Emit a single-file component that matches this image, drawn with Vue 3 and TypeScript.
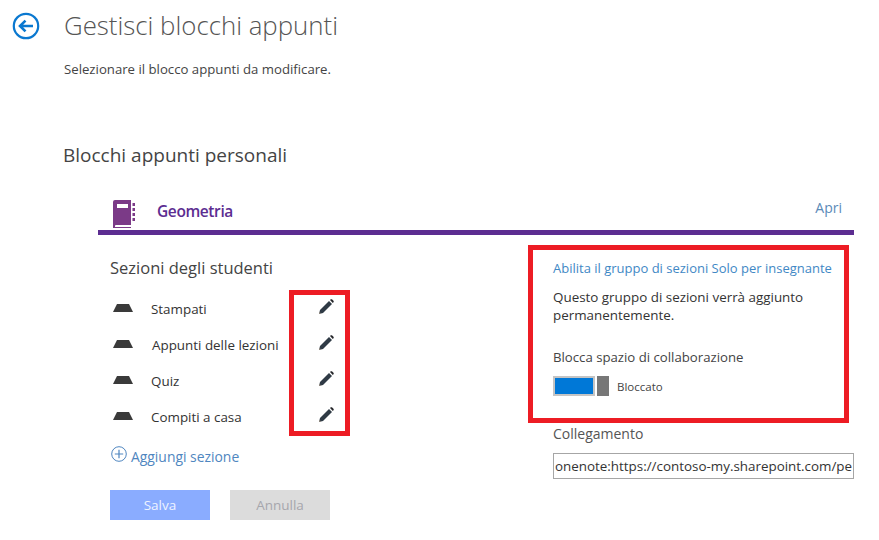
<script setup lang="ts">
const sections = [
  { name: 'Stampati', indent: 0 },
  { name: 'Appunti delle lezioni', indent: 1 },
  { name: 'Quiz', indent: 0 },
  { name: 'Compiti a casa', indent: 0 },
]
</script>

<template>
  <div class="page">
    <header class="head">
      <svg class="back" width="28" height="28" viewBox="0 0 28 28" fill="none" stroke="#0a78d0">
        <circle cx="14" cy="14" r="12.2" stroke-width="2.2" />
        <path d="M21 14H8M13.5 8.6 8 14l5.5 5.4" stroke-width="2.6" />
      </svg>
      <div>
        <h1>Gestisci blocchi appunti</h1>
        <p class="sub">Selezionare il blocco appunti da modificare.</p>
      </div>
    </header>

    <h2>Blocchi appunti personali</h2>

    <section class="card">
      <div class="card-head">
        <svg class="book" width="23" height="28" viewBox="0 0 23 28">
          <path d="M2 0h16v25H3.500C2.600 25 2 25.400 2 26v1h16v1H0V2a2 2 0 0 1 2-2z" fill="#7b3a87" />
          <rect x="4" y="4" width="11" height="4" fill="#fff" />
          <path d="M19.500 3h2.500v3h-2.500zM19.500 8h2.500v3h-2.500zM19.500 13h2.500v3h-2.500zM19.500 18h2.500v3h-2.500z" fill="#7b3a87" />
        </svg>
        <span class="nb-name">Geometria</span>
        <a class="open">Apri</a>
      </div>

      <div class="columns">
        <div class="left">
          <h3>Sezioni degli studenti</h3>
          <ul>
            <li v-for="s in sections" :key="s.name">
              <svg class="tab" width="20" height="8" viewBox="0 0 20 8">
                <path d="M4 0h12l4 8H0z" fill="#3a3a3a" />
              </svg>
              <span class="sec-name" :class="{ shifted: s.indent }">{{ s.name }}</span>
              <svg class="pencil" width="16" height="16" viewBox="0 0 16 16">
                <path d="M1 15l1-4L11 2l3 3-9 9z" fill="#2f3a45" />
                <path d="M12 1l.8-.7c.5-.3 1-.2 1.400.2l1.300 1.300c.4.500.4 1 0 1.400l-.7.800z" fill="#26272b" />
                <path d="M1 15l.5-2.100 1.600 1.600z" fill="#9a8f80" />
              </svg>
            </li>
          </ul>
          <a class="add">
            <svg width="16" height="16" viewBox="0 0 16 16" fill="none" stroke="#4f86c0">
              <circle cx="8" cy="8" r="7.300" />
              <path d="M8 3.800v8.400M3.800 8h8.400" stroke-width="1.200" />
            </svg>
            <span>Aggiungi sezione</span>
          </a>
          <div class="actions">
            <button class="save" type="button">Salva</button>
            <button class="cancel" type="button">Annulla</button>
          </div>
        </div>

        <div class="right">
          <a class="link">Abilita il gruppo di sezioni Solo per insegnante</a>
          <p class="note">Questo gruppo di sezioni verrà aggiunto permanentemente.</p>
          <div class="lock-label">Blocca spazio di collaborazione</div>
          <div class="toggle-row">
            <span class="track"></span>
            <span class="thumb"></span>
            <span class="toggle-text">Bloccato</span>
          </div>
          <div class="link-label">Collegamento</div>
          <input class="url" type="text" readonly value="onenote:https://contoso-my.sharepoint.com/personal/" />
        </div>
      </div>
    </section>

    <div class="mark mark-pencils"></div>
    <div class="mark mark-options"></div>
  </div>
</template>

<style>
html, body { margin: 0; background: #fff; }
</style>

<style scoped>
.page {
  position: relative;
  width: 879px;
  height: 540px;
  overflow: hidden;
  background: #fff;
  font-family: "Open Sans", "Noto Sans", sans-serif;
  color: #333;
}
.head { display: flex; padding: 12px 0 0 12px; }
.back { flex-shrink: 0; margin-right: 24px; }
h1 {
  margin: -2px 0 0;
  font-size: 25.800px;
  line-height: 30px;
  font-weight: 300;
  color: #555;
}
.sub { margin: 21px 0 0; font-size: 13.200px; line-height: 16px; color: #444; }
h2 {
  margin: 66px 0 0 63px;
  font-size: 19px;
  line-height: 24px;
  font-weight: 400;
  color: #444;
}
.card { width: 756px; margin: 22px 0 0 98px; }
.card-head {
  display: flex;
  align-items: flex-start;
  height: 41px;
  padding: 0 12px 0 15px;
  border-bottom: 5px solid #5c2d91;
  box-sizing: content-box;
}
.book { flex-shrink: 0; margin-top: 11px; }
.nb-name { margin: 12px 0 0 21px; font-size: 15.500px; line-height: 20px; font-weight: 600; color: #5c2d91; letter-spacing: -0.4px; }
.open { margin: 10px 0 0 auto; font-size: 14px; line-height: 18px; color: #5b8ab8; }
.columns { display: grid; grid-template-columns: 455px 301px; }
.left { padding: 21px 0 0 12px; }
h3 { margin: 0; font-size: 16.500px; line-height: 24px; font-weight: 400; color: #444; }
ul { list-style: none; margin: 11px 0 0; padding: 0; }
li { display: flex; align-items: center; height: 36px; }
.tab { margin-left: 3px; flex-shrink: 0; margin-top: -2px; }
.sec-name { width: 167px; margin-left: 18px; font-size: 13.400px; color: #333; white-space: nowrap; }
.sec-name.shifted { margin-left: 19px; width: 166px; }
.pencil { margin-top: -5px; }
.add { display: flex; align-items: flex-start; margin: 11px 0 0 1px; color: #4f86c0; font-size: 13.900px; line-height: 18px; }
.add span { margin: 2px 0 0 4px; }
.actions { display: flex; gap: 20px; margin-top: 24px; }
button {
  width: 100px;
  height: 30px;
  padding: 0;
  border: 0;
  font-family: inherit;
  font-size: 13.500px;
}
.save { background: #8aacff; color: #eef3ff; }
.cancel { background: #dcdcdc; color: #a6a6ac; }
.right { padding-top: 24px; }
.link { display: block; font-size: 13px; line-height: 18px; color: #3f88c5; white-space: nowrap; }
.note { margin: 11px 0 0; font-size: 13.400px; line-height: 18px; color: #333; width: 280px; }
.lock-label { margin-top: 24px; font-size: 13.200px; line-height: 18px; color: #444; }
.toggle-row { display: flex; align-items: center; margin-top: 10px; height: 20px; }
.track { width: 42px; height: 20px; box-sizing: border-box; border: 2px solid #c4c4c4; background: #0078d7; }
.thumb { width: 12px; height: 20px; margin-left: 2px; background: #777; }
.toggle-text { margin-left: 8px; font-size: 11.500px; color: #444; }
.link-label { margin-top: 29px; font-size: 14px; line-height: 18px; color: #555; }
.url {
  display: block;
  box-sizing: border-box;
  width: 301px;
  height: 26px;
  margin-top: 10px;
  padding: 0 1px;
  border: 1px solid #a6a6a6;
  border-radius: 0;
  outline: none;
  font-family: inherit;
  font-size: 13.400px;
  color: #333;
  background: #fff;
}
.mark { position: absolute; box-sizing: border-box; border: 5px solid #ed1c24; }
.mark-pencils { left: 289px; top: 290px; width: 61px; height: 146px; }
.mark-options { left: 528px; top: 245px; width: 321px; height: 178px; }
</style>
